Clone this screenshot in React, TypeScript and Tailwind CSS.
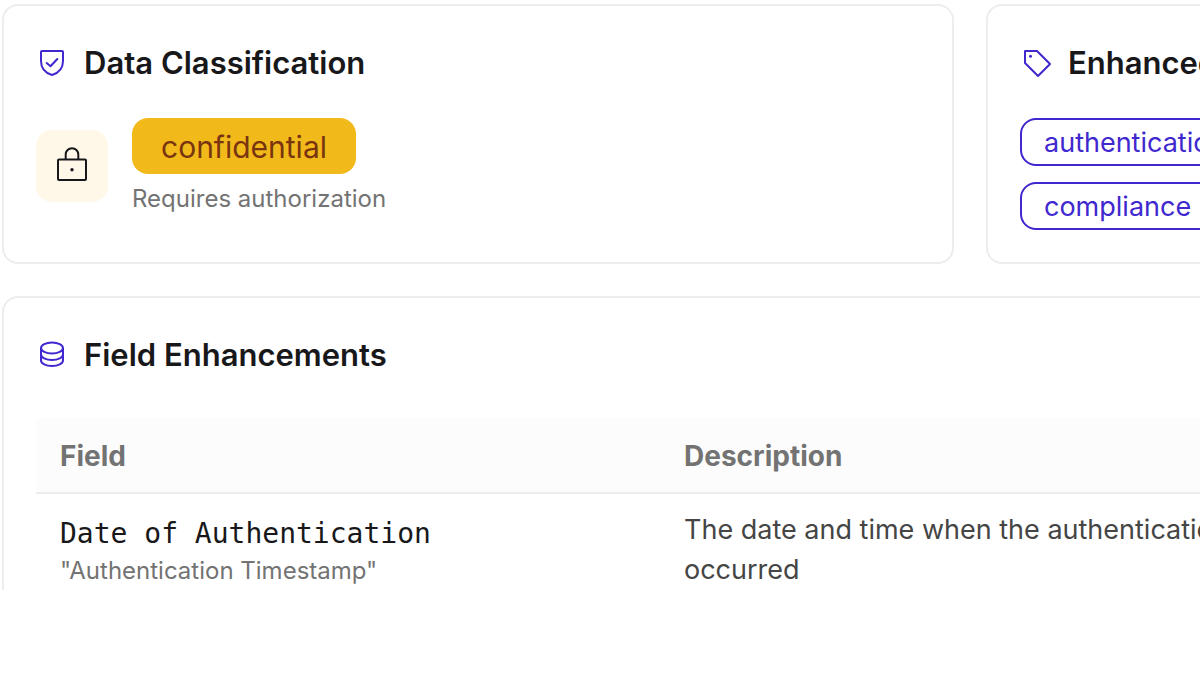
import type { ReactNode } from 'react';

type IconProps = { className?: string };

function ShieldIcon({ className }: IconProps) {
  return (
    <svg className={className} viewBox="0 0 32 32" fill="none" stroke="currentColor" strokeWidth="2" strokeLinecap="round" strokeLinejoin="round" aria-hidden="true">
      <path d="M5 14V5a1 1 0 0 1 1-1h20a1 1 0 0 1 1 1v9c0 7-4.300 12-11 14C9.300 26 5 21 5 14Z" />
      <path d="m10.700 16 3.800 3.300 6.800-7.300" />
    </svg>
  );
}

function TagIcon({ className }: IconProps) {
  return (
    <svg className={className} viewBox="0 0 32 32" fill="none" stroke="currentColor" strokeWidth="2" strokeLinejoin="round" aria-hidden="true">
      <path d="M5 4h12l13 13L18 29 5 16Z" />
      <circle cx="10.500" cy="9.300" r="1.500" fill="currentColor" stroke="none" />
    </svg>
  );
}

function DatabaseIcon({ className }: IconProps) {
  return (
    <svg className={className} viewBox="0 0 32 32" fill="none" stroke="currentColor" strokeWidth="2" aria-hidden="true">
      <ellipse cx="16" cy="9" rx="11" ry="5.500" />
      <path d="M5 9v6.500c0 3 4.900 5.500 11 5.500s11-2.500 11-5.500V9" />
      <path d="M5 15v6.500c0 3 4.900 5.500 11 5.500s11-2.500 11-5.500V15" />
    </svg>
  );
}

function LockIcon({ className }: IconProps) {
  return (
    <svg className={className} viewBox="0 0 40 40" fill="none" stroke="currentColor" strokeWidth="2" aria-hidden="true">
      <rect x="6" y="13.500" width="28" height="20.500" rx="1" />
      <path d="M13.700 13.500V8.500a6.300 6.300 0 0 1 12.600 0v5" />
      <circle cx="20" cy="23.700" r="1.700" fill="currentColor" stroke="none" />
    </svg>
  );
}

function CardTitle({ icon, children }: { icon: ReactNode; children: ReactNode }) {
  return (
    <h2 className="flex items-center gap-4 pt-0.5 text-[31px] leading-[46px] font-semibold text-[#18181b]">
      <span className="text-[#4028cf]">{icon}</span>
      {children}
    </h2>
  );
}

const tags = ['authentication', 'compliance'];

const fields = [
  {
    name: 'Date of Authentication',
    alias: '"Authentication Timestamp"',
    description: 'The date and time when the authentication occurred',
  },
];

export default function App() {
  return (
    <main className="overflow-hidden bg-white pl-0.5 pt-1 font-['Inter',sans-serif]">
      <div className="grid w-full min-w-[1936px] grid-cols-2 gap-8">
        <section className="rounded-2xl border-2 border-[#ededed] p-8">
          <CardTitle icon={<ShieldIcon className="size-8" />}>Data Classification</CardTitle>
          <div className="mt-8 flex items-center gap-6">
            <div className="rounded-2xl bg-[#fff8e8] p-4 text-[#18181b]">
              <LockIcon className="size-10" />
            </div>
            <div>
              <span className="inline-block rounded-2xl bg-[#f2b91b] px-[29px] pt-0.5 align-top text-[30px] leading-[54px] text-[#78350f]">
                confidential
              </span>
              <p className="mt-2 pt-0.5 text-2xl leading-[30px] text-[#737373]">Requires authorization</p>
            </div>
          </div>
        </section>

        <section className="rounded-2xl border-2 border-[#ededed] p-8">
          <CardTitle icon={<TagIcon className="size-8" />}>Enhanced Tags</CardTitle>
          <ul className="mt-8 flex flex-col items-start gap-4">
            {tags.map((tag) => (
              <li
                key={tag}
                className="rounded-2xl border-2 border-[#4028cf] px-[22px] pt-0.5 text-[27px] leading-[42px] text-[#4028cf]"
              >
                {tag}
              </li>
            ))}
          </ul>
        </section>

        <section className="col-span-2 rounded-t-2xl border-2 border-b-0 border-[#ededed] px-8 pt-8">
          <CardTitle icon={<DatabaseIcon className="size-8" />}>Field Enhancements</CardTitle>
          <table className="mt-10 w-full table-fixed text-left">
            <thead>
              <tr className="h-[75px] border-b-2 border-[#ededed] bg-[#fcfcfc] text-[28px] text-[#737373]">
                <th scope="col" className="w-[624px] px-6 pt-0.5 font-bold">Field</th>
                <th scope="col" className="px-6 pt-0.5 font-bold">Description</th>
              </tr>
            </thead>
            <tbody>
              {fields.map((field) => (
                <tr key={field.name} className="align-top">
                  <td className="px-6 pt-4">
                    <div className="pt-0.5 font-['DejaVu_Sans_Mono',monospace] text-[28px] leading-[44px] text-[#18181b]">
                      {field.name}
                    </div>
                    <div className="text-2xl leading-[30px] text-[#737373]">{field.alias}</div>
                  </td>
                  <td className="px-6 pt-4 text-[27px] leading-10 text-[#454545]">
                    <p className="max-w-[576px]">{field.description}</p>
                  </td>
                </tr>
              ))}
            </tbody>
          </table>
        </section>
      </div>
    </main>
  );
}
